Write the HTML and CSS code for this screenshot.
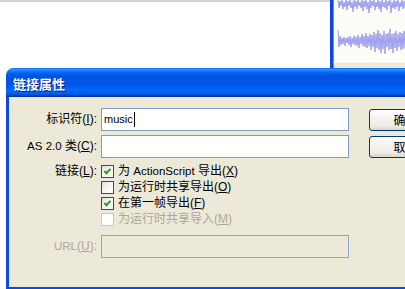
FILE: index.html
```html
<!DOCTYPE html>
<html>
<head>
<meta charset="utf-8">
<link rel="stylesheet" href="styles.css">
</head>
<body>
<div class="screen">
  <div class="top">
    <div class="canvas"></div>
    <div class="wavewin">
      <div class="wavepanel">
        <svg class="waves" width="71" height="56" viewBox="0 0 71 56">
          <polyline fill="none" stroke="#9c9cf0" stroke-width="1" points="4,0 5,8 6,1 7,6 8,0 9,9 10,2 11,7 12,0 13,10 14,1 15,6 16,0 17,8 18,2 19,12 20,0 21,7 22,1 23,9 24,0 25,6 26,2 27,8 28,0 29,11 30,1 31,7 32,0 33,9 34,2 35,13 36,0 37,8 38,1 39,6 40,0 41,10 42,2 43,7 44,0 45,9 46,1 47,12 48,0 49,7 50,2 51,8 52,0 53,10 54,1 55,6 56,0 57,13 58,2 59,8 60,0 61,9 62,1 63,7 64,0 65,11 66,2 67,7 68,0 69,9 70,1 71,8"/>
          <polyline fill="none" stroke="#9c9cf0" stroke-width="1" points="4,30 5,47 6,36 7,45 8,38 9,44 10,37 11,46 12,38 13,43 14,37 15,45 16,36 17,47 18,38 19,44 20,36 21,45 22,37 23,46 24,35 25,48 26,37 27,44 28,34 29,46 30,36 31,47 32,33 33,48 34,36 35,46 36,34 37,50 38,35 39,47 40,32 41,52 42,34 43,48 44,30 45,50 46,33 47,53 48,35 49,49 50,31 51,54 52,34 53,47 54,33 55,50 56,29 57,49 58,34 59,53 60,33 61,48 62,31 63,51 64,34 65,47 66,32 67,50 68,33 69,49 70,31 71,48"/>
        </svg>
      </div>
      <div class="wavefoot"></div>
    </div>
  </div>
  <div class="dialog">
    <div class="titlebar"><span class="title">链接属性</span></div>
    <div class="dbody">
      <div class="form">
        <div class="row r1">
          <span class="lbl">标识符(<u>I</u>):</span>
          <div class="input"><span class="en">music</span><span class="caret"></span></div>
        </div>
        <div class="row r2">
          <span class="lbl"><span class="en">AS 2.0</span> 类(<u>C</u>):</span>
          <div class="input"></div>
        </div>
        <div class="row r3">
          <span class="lbl">链接(<u>L</u>):</span>
          <div class="checks">
            <div class="chk"><span class="box"><svg width="11" height="11" viewBox="0 0 11 11"><path d="M2.5 5 L4.5 7.2 L8.5 2.8" fill="none" stroke="#21a121" stroke-width="2"/></svg></span><span class="ctext">为 <span class="en">ActionScript</span> 导出(<u>X</u>)</span></div>
            <div class="chk"><span class="box"></span><span class="ctext">为运行时共享导出(<u>O</u>)</span></div>
            <div class="chk"><span class="box"><svg width="11" height="11" viewBox="0 0 11 11"><path d="M2.5 5 L4.5 7.2 L8.5 2.8" fill="none" stroke="#21a121" stroke-width="2"/></svg></span><span class="ctext">在第一帧导出(<u>F</u>)</span></div>
            <div class="chk dis"><span class="box"></span><span class="ctext">为运行时共享导入(<u>M</u>)</span></div>
          </div>
        </div>
        <div class="row r4">
          <span class="lbl dis"><span class="en">URL</span>(<u>U</u>):</span>
          <div class="input disabled"></div>
        </div>
      </div>
      <div class="buttons">
        <button class="btn">确定</button>
        <button class="btn">取消</button>
      </div>
    </div>
  </div>
</div>
</body>
</html>
```

FILE: styles.css
```css
* { box-sizing: border-box; }
html, body { margin: 0; padding: 0; background: #fff; }
body {
  font-family: "Liberation Sans", "Noto Sans CJK SC", sans-serif;
  font-size: 12px;
  color: #000;
}
.screen {
  width: 405px;
  height: 289px;
  overflow: hidden;
  background: #fff;
}
.top {
  display: flex;
  height: 68px;
}
.canvas {
  width: 330px;
  height: 68px;
  background: #fff;
  border-top: 2px solid #d6d4d0;
}
.wavewin {
  flex: 1;
  display: flex;
  flex-direction: column;
  border-left: 3px solid #0b46e2;
}
.wavepanel {
  flex: 1;
  background: #fdfdf7;
  border-left: 1px solid #8c8a80;
  overflow: hidden;
}
.waves { display: block; }
.wavefoot {
  height: 6px;
  background: #ece9d8;
  border-top: 1px solid #f6f4ea;
  border-left: 1px solid #8c8a80;
}
.dialog {
  margin-left: 6px;
  width: 440px;
}
.titlebar {
  height: 29px;
  border-radius: 7px 7px 0 0;
  background: linear-gradient(to bottom, #0058ee 0%, #3593ff 4%, #288eff 7%, #127dff 10%, #036ffc 14%, #0262ee 18%, #0057e5 24%, #0054e3 30%, #0055eb 56%, #005bf5 66%, #026afe 76%, #0062ef 86%, #0052d6 92%, #0040ab 96%, #003092 100%);
  padding: 9px 0 0 7px;
}
.title {
  color: #fff;
  font-family: "Noto Sans CJK SC", sans-serif;
  font-weight: bold;
  font-size: 13px;
  line-height: 13px;
  text-shadow: 1px 1px 0 #0a1e6e;
  display: block;
}
.dbody {
  display: flex;
  height: 194px;
  background: #ece9d8;
  border-left: 3px solid #0a4be0;
  border-bottom: 4px solid #0a4be0;
  padding-top: 11px;
}
.form {
  display: flex;
  flex-direction: column;
  width: 340px;
}
.row {
  display: flex;
  align-items: center;
  gap: 4px;
}
.r2 { margin-top: 4px; }
.r3 { margin-top: 7px; align-items: flex-start; }
.r4 { margin-top: 6px; }
.lbl {
  width: 88px;
  text-align: right;
  line-height: 13px;
  white-space: nowrap;
}
.lbl.dis, .chk.dis { color: #aca899; }
u { text-decoration: underline; text-underline-offset: 1px; }
.en { font-size: 11.5px; }
.input {
  width: 248px;
  height: 23px;
  border: 1px solid #7f9db9;
  background: #fff;
  display: flex;
  align-items: center;
  padding-left: 2px;
  line-height: 13px;
}
.input .en { font-size: 11px; }
.input.disabled { background: #ece9d8; border-color: #8ea6c2; }
.caret {
  display: inline-block;
  width: 1px;
  height: 15px;
  background: #000;
  margin-left: 1px;
}
.checks {
  display: flex;
  flex-direction: column;
}
.chk {
  display: flex;
  align-items: flex-start;
  height: 16px;
  gap: 4px;
  white-space: nowrap;
}
.box {
  width: 13px;
  height: 13px;
  border: 1px solid #1c5180;
  background: linear-gradient(135deg, #dcdcd7 0%, #f4f4f2 45%, #ffffff 100%);
  display: flex;
  align-items: center;
  justify-content: center;
  flex: none;
}
.chk.dis .box {
  border-color: #cac8bb;
  background: #fff;
}
.ctext { line-height: 13px; }
.buttons {
  display: flex;
  flex-direction: column;
  gap: 5px;
  margin-left: 20px;
  padding-top: 1px;
}
.btn {
  width: 75px;
  height: 22px;
  border: 1px solid #003c74;
  border-radius: 3px;
  background: linear-gradient(to bottom, #ffffff 0%, #f4f3ee 40%, #ecebe5 80%, #d8d4c8 100%);
  font-family: "Noto Sans CJK SC", sans-serif;
  font-size: 12px;
  line-height: 12px;
  color: #000;
  padding: 0;
  letter-spacing: 1px;
}
```
